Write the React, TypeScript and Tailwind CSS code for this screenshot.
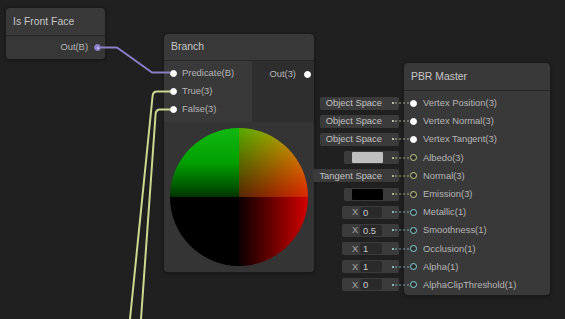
import React from 'react';

type PortKind = 'vec' | 'vec3' | 'float' | 'bool';

const portRing: Record<PortKind, string> = {
    vec: 'border-white bg-white',
    vec3: 'border-[#c9d384] bg-[#2c2c2c]',
    float: 'border-[#84d6dc] bg-[#2c2c2c]',
    bool: 'border-[#8c82cc] bg-[#8c82cc]',
};

const dotColor: Record<PortKind, string> = {
    vec: '#e4e6c0',
    vec3: '#d6de98',
    float: '#9fe4e8',
    bool: '#8c82cc',
};

const Port: React.FC<{ kind: PortKind }> = ({ kind }) => (
    <span
        className={`w-[7px] h-[7px] shrink-0 rounded-full border-[1.5px] flex items-center justify-center ${portRing[kind]}`}
    >
        {kind === 'bool' && <span className="w-[2px] h-[2px] rounded-full bg-[#d8d2f4]" />}
    </span>
);

// little inline value boxes sitting left of the master node
const FieldBox: React.FC<{ kind: PortKind; pl: string; gap: string; children: React.ReactNode }> = ({ kind, pl, gap, children }) => (
    <div className={`h-[13px] flex items-center bg-[#3b3b3b] rounded-[2px] pr-[5px] ${pl}`}>
        {children}
        <span className={`w-[2px] h-[2px] rounded-full ${gap}`} style={{ background: dotColor[kind] }} />
    </div>
);

const FloatField: React.FC<{ value: string }> = ({ value }) => (
    <FieldBox kind="float" pl="pl-[10px]" gap="ml-[10px]">
        <span className="w-[6px] text-[#a8a8a8]">X</span>
        <span className="ml-[2px] w-[22px] h-[11px] bg-[#2a2a2a] rounded-[2px] pl-[3px] leading-[11px] text-[#c8c8c8]">{value}</span>
    </FieldBox>
);

const ColorField: React.FC<{ color: string }> = ({ color }) => (
    <FieldBox kind="vec3" pl="pl-[8px]" gap="ml-[9px]">
        <span className="w-[31px] h-[11px] rounded-[1px]" style={{ background: color }} />
    </FieldBox>
);

const SpaceField: React.FC<{ label: string; kind: PortKind }> = ({ label, kind }) => (
    <FieldBox kind={kind} pl="pl-[6px]" gap="ml-[10px]">
        <span className="text-[#c2c2c2] text-[9.4px]">{label}</span>
    </FieldBox>
);

const masterInputs: { label: string; kind: PortKind; field: React.ReactNode }[] = [
    { label: 'Vertex Position(3)', kind: 'vec', field: <SpaceField label="Object Space" kind="vec" /> },
    { label: 'Vertex Normal(3)', kind: 'vec', field: <SpaceField label="Object Space" kind="vec" /> },
    { label: 'Vertex Tangent(3)', kind: 'vec', field: <SpaceField label="Object Space" kind="vec" /> },
    { label: 'Albedo(3)', kind: 'vec3', field: <ColorField color="#bfbfbf" /> },
    { label: 'Normal(3)', kind: 'vec3', field: <SpaceField label="Tangent Space" kind="vec3" /> },
    { label: 'Emission(3)', kind: 'vec3', field: <ColorField color="#000000" /> },
    { label: 'Metallic(1)', kind: 'float', field: <FloatField value="0" /> },
    { label: 'Smoothness(1)', kind: 'float', field: <FloatField value="0.5" /> },
    { label: 'Occlusion(1)', kind: 'float', field: <FloatField value="1" /> },
    { label: 'Alpha(1)', kind: 'float', field: <FloatField value="1" /> },
    { label: 'AlphaClipThreshold(1)', kind: 'float', field: <FloatField value="0" /> },
];

const nodeShell = 'absolute rounded-[4px] bg-[#393939] shadow-[0_0_0_1px_#1a1a1a,0_1px_4px_rgba(0,0,0,0.5)] overflow-hidden';
const header = 'flex items-center px-[7px] text-[10.4px] text-[#c6c6c6] border-b border-[#262626]';

export default function App() {
    return (
        <div
            className="relative w-[565px] h-[319px] overflow-hidden bg-[#202020] text-[9.4px] text-[#b6b6b6]"
            style={{ fontFamily: '"Liberation Sans", Arial, sans-serif' }}
        >
            {/* Is Front Face */}
            <div className={`${nodeShell} left-[6px] top-[8px] w-[99px]`}>
                <div className={`${header} h-[28px]`}>Is Front Face</div>
                <div className="h-[23px] bg-[#373737] flex items-center justify-end pr-[4px] gap-[6px]">
                    <span>Out(B)</span>
                    <Port kind="bool" />
                </div>
            </div>

            {/* Branch */}
            <div className={`${nodeShell} left-[164px] top-[34px] w-[150px]`}>
                <div className={`${header} h-[27px]`}>Branch</div>
                <div className="flex h-[61px]">
                    <div className="w-[88px] bg-[#393939] pt-[3px]">
                        {['Predicate(B)', 'True(3)', 'False(3)'].map((l) => (
                            <div key={l} className="h-[18px] flex items-center pl-[6px] gap-[5px]">
                                <Port kind="vec" />
                                <span>{l}</span>
                            </div>
                        ))}
                    </div>
                    <div className="flex-1 bg-[#2e2e2e] pt-[4px]">
                        <div className="h-[18px] flex items-center justify-end pr-[3px] gap-[8px]">
                            <span>Out(3)</span>
                            <Port kind="vec" />
                        </div>
                    </div>
                </div>
                <div className="h-[150px] bg-[#343434] flex items-center justify-center">
                    <div className="w-[138px] h-[138px] rounded-full overflow-hidden grid grid-cols-2 grid-rows-2">
                        <div className="bg-[linear-gradient(to_bottom,#12b812_0%,#00a000_50%,#005800_85%,#003200_100%)]" />
                        <div className="bg-[linear-gradient(to_right,#560000,#dc0000),linear-gradient(to_bottom,#00aa00,#002600)] bg-blend-screen" />
                        <div className="bg-black" />
                        <div className="bg-[linear-gradient(to_right,#0a0000,#d20000)]" />
                    </div>
                </div>
            </div>

            {/* PBR Master with its inline inputs */}
            <div className="absolute left-[300px] top-[63px] flex">
                <div className="w-[104px] pt-[31px] pr-[5px] flex flex-col items-end">
                    {masterInputs.map((m) => (
                        <div key={m.label} className="h-[18.2px] flex items-center">
                            {m.field}
                        </div>
                    ))}
                </div>
                <div className="relative w-[146px] h-[232px] rounded-[4px] bg-[#393939] shadow-[0_0_0_1px_#1a1a1a,0_1px_4px_rgba(0,0,0,0.5)]">
                    <div className={`${header} h-[28px]`}>PBR Master</div>
                    <div className="pt-[3px]">
                        {masterInputs.map((m) => (
                            <div key={m.label} className="relative h-[18.2px] flex items-center pl-[6px] gap-[6px]">
                                <svg className="absolute left-[-9px] top-1/2 -translate-y-1/2" width="15" height="2">
                                    <line x1="0" y1="1" x2="15" y2="1" stroke={dotColor[m.kind]} strokeOpacity="0.7" strokeWidth="1" strokeDasharray="2 2" />
                                </svg>
                                <Port kind={m.kind} />
                                <span>{m.label}</span>
                            </div>
                        ))}
                    </div>
                </div>
            </div>

            {/* wires */}
            <svg className="absolute inset-0 pointer-events-none" width="565" height="319">
                <path d="M101 47.5 H117 L152 72.5 H170" fill="none" stroke="#8a7fc8" strokeWidth="2" strokeLinejoin="round" />
                <path d="M170 91.5 H157 Q153 91.5 152.6 96 L130 319" fill="none" stroke="#cdd890" strokeWidth="2" />
                <path d="M170 109.5 H160 Q156 109.5 155.6 114 L141 319" fill="none" stroke="#cdd890" strokeWidth="2" />
            </svg>
        </div>
    );
}
